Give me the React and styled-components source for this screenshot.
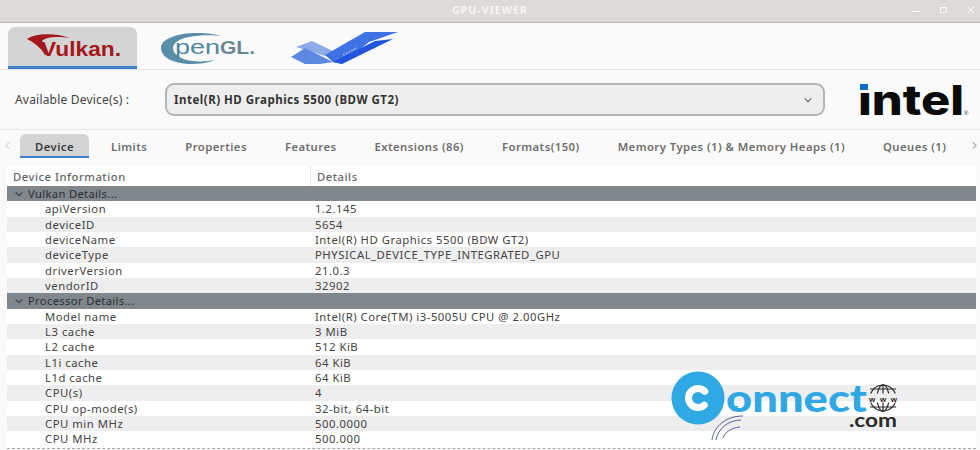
import React from "react";
import styled, { createGlobalStyle } from "styled-components";

const GlobalStyle = createGlobalStyle`
  html, body {
    margin: 0;
    padding: 0;
    width: 980px;
    height: 450px;
    overflow: hidden;
    background: #fafafa;
    font-family: "Noto Sans", "DejaVu Sans", sans-serif;
  }
`;

const Window = styled.div`
  position: relative;
  width: 980px;
  height: 450px;
  overflow: hidden;
  display: flex;
  flex-direction: column;
  background: #fafafa;
`;

const TitleBar = styled.div`
  position: relative;
  height: 22px;
  flex: none;
  display: flex;
  align-items: center;
  justify-content: center;
  background: #dedbd6;
  border-bottom: 1px solid #bdbab5;
`;

const Title = styled.div`
  font-size: 10.5px;
  font-weight: 700;
  letter-spacing: 1.1px;
  color: #f6f5f3;
  margin-top: -2px;
`;

const WindowControls = styled.div`
  position: absolute;
  right: 0;
  top: 4px;
  display: flex;
  align-items: center;
  color: #fbfaf8;
`;

const ControlButton = styled.svg`
  display: block;
  width: 28px;
  height: 12px;
`;

const LogoTabs = styled.div`
  height: 47px;
  flex: none;
  display: flex;
  align-items: flex-end;
  padding-left: 8px;
  box-sizing: border-box;
  border-bottom: 1px solid #e2e2e2;
`;

const LogoTab = styled.div`
  width: ${(p) => p.$width}px;
  height: 42px;
  box-sizing: border-box;
  border-radius: 7px 7px 0 0;
  background: ${(p) => (p.$active ? "#d4d4d4" : "transparent")};
  border-bottom: 3px solid ${(p) => (p.$active ? "#3d7fcb" : "transparent")};
  svg {
    display: block;
  }
`;

const DeviceRow = styled.div`
  height: 60px;
  flex: none;
  display: flex;
  align-items: center;
  box-sizing: border-box;
  padding-left: 15px;
  border-bottom: 1px solid #e9e9e9;
`;

const DeviceLabel = styled.div`
  width: 150px;
  font-size: 12px;
  letter-spacing: 0.2px;
  color: #444;
`;

const DeviceSelect = styled.div`
  width: 660px;
  height: 33px;
  box-sizing: border-box;
  display: flex;
  align-items: center;
  justify-content: space-between;
  padding: 0 10px 0 7px;
  background: #eeeeee;
  border: 2px solid #b4b4b2;
  border-radius: 9px;
  font-size: 11.5px;
  font-weight: 700;
  letter-spacing: 0.5px;
  color: #333;
`;

const IntelLogo = styled.svg`
  display: block;
  margin-left: 33px;
  width: 118px;
  height: 40px;
  overflow: visible;
`;

const TabBar = styled.div`
  height: 32px;
  flex: none;
  display: flex;
  align-items: center;
  position: relative;
  padding-left: 20px;
`;

const TabArrow = styled.div`
  position: absolute;
  top: 11px;
  left: ${(p) => p.$left}px;
  color: #9a9a9a;
  svg {
    display: block;
  }
`;

const Tab = styled.div`
  height: 24px;
  box-sizing: border-box;
  display: flex;
  align-items: center;
  padding: 2px ${(p) => (p.$active ? 15 : 19)}px 0;
  margin-right: ${(p) => (p.$active ? 3 : 0)}px;
  white-space: nowrap;
  font-size: 11.3px;
  font-weight: 600;
  letter-spacing: 0.45px;
  color: ${(p) => (p.$active ? "#3c3c3c" : "#6e6e6e")};
  background: ${(p) => (p.$active ? "#d4d4d4" : "transparent")};
  border-radius: 6px 6px 0 0;
  border-bottom: 2px solid ${(p) => (p.$active ? "#3d7fcb" : "transparent")};
`;

const Table = styled.div`
  margin: 4px 4px 0 7px;
  background: #fff;
  border-bottom: 1px dashed #a8a8a8;
  height: 283px;
  box-sizing: border-box;
  overflow: hidden;
`;

const HeaderRow = styled.div`
  height: 20px;
  display: grid;
  grid-template-columns: 303px 1fr;
  align-items: center;
  font-size: 11.2px;
  font-weight: 500;
  letter-spacing: 0.55px;
  color: #666;
`;

const HeaderCell = styled.div`
  height: 100%;
  display: flex;
  align-items: center;
  box-sizing: border-box;
  padding-left: ${(p) => p.$pad}px;
  border-left: ${(p) => (p.$divider ? "1px solid #e6e6e6" : "none")};
`;

const GroupRow = styled.div`
  height: 15.33px;
  display: flex;
  align-items: center;
  gap: 4px;
  padding-left: 7px;
  background: #80878d;
  font-size: 11.2px;
  letter-spacing: 0.35px;
  color: #2b2f33;
  svg {
    display: block;
  }
`;

const DataRow = styled.div`
  height: 15.33px;
  display: grid;
  grid-template-columns: 308px 1fr;
  align-items: center;
  background: ${(p) => (p.$odd ? "#eeeeee" : "#ffffff")};
  font-size: 11.3px;
  letter-spacing: 0.52px;
  color: #444;
`;

const NameCell = styled.div`
  padding-left: 38px;
`;

const ValueCell = styled.div``;

/* watermark sits on top of the table */
const Watermark = styled.svg`
  position: absolute;
  left: 668px;
  top: 368px;
  width: 240px;
  height: 78px;
`;

const VulkanMark = () => (
  <svg width="129" height="39" viewBox="0 0 129 39">
    <path
      d="M19 12 C26 7 44 5 62 11 C48 9 38 10 34 14 L40 27 L37 28 C33 21 27 16 19 12 Z"
      fill="#a3181c"
    />
    <text
      x="33"
      y="29"
      fontFamily="Liberation Sans"
      fontWeight="700"
      fontSize="19.5"
      textLength="80"
      lengthAdjust="spacingAndGlyphs"
      fill="#a3181c"
    >
      Vulkan.
    </text>
  </svg>
);

const OpenGlMark = () => (
  <svg width="125" height="39" viewBox="0 0 125 39">
    <path
      d="M24 21 C24 12 40 6 60 6 C70 6 78 7 83 9 C74 8 62 8 52 10 C42 12 36 16 36 21 C36 27 44 33 56 34 C64 35 72 34 78 33 C70 36 62 37 55 37 C36 37 24 30 24 21 Z"
      fill="#5b8ea8"
    />
    <text x="38" y="27" fontFamily="Liberation Sans" fontSize="20" textLength="45" lengthAdjust="spacingAndGlyphs" fill="#4f87a3">
      pen
    </text>
    <text x="83" y="27" fontFamily="Liberation Sans" fontWeight="700" fontSize="18" textLength="35" lengthAdjust="spacingAndGlyphs" fill="#6a8794">
      GL.
    </text>
  </svg>
);

const ThirdMark = () => (
  <svg width="125" height="39" viewBox="0 0 125 39">
    <polygon points="17,20 33,14 56,25 46,29" fill="#8fabe9" />
    <polygon points="12,30 26,21 54,35 41,37 26,37" fill="#5d88e2" />
    <polygon points="46,28 86,5 119,5 90,15 63,37 54,35" fill="#3f72e3" />
    <polygon points="54,35 96,14 114,12 63,37" fill="#2255dd" />
    <line x1="64" y1="28" x2="78" y2="21" stroke="#8aa6ea" strokeWidth="2" strokeDasharray="2 1" />
  </svg>
);

const Chevron = ({ dir = "down", size = 9, color = "currentColor" }) => {
  const paths = {
    down: "M1.5 3 L4.5 6 L7.5 3",
    left: "M6 1.5 L3 4.5 L6 7.5",
    right: "M3 1.5 L6 4.5 L3 7.5",
  };
  return (
    <svg width={size} height={size} viewBox="0 0 9 9" fill="none">
      <path d={paths[dir]} stroke={color} strokeWidth="1" />
    </svg>
  );
};

const tabs = [
  "Device",
  "Limits",
  "Properties",
  "Features",
  "Extensions (86)",
  "Formats(150)",
  "Memory Types (1) & Memory Heaps (1)",
  "Queues (1)",
];

const groups = [
  {
    title: "Vulkan Details...",
    rows: [
      ["apiVersion", "1.2.145"],
      ["deviceID", "5654"],
      ["deviceName", "Intel(R) HD Graphics 5500 (BDW GT2)"],
      ["deviceType", "PHYSICAL_DEVICE_TYPE_INTEGRATED_GPU"],
      ["driverVersion", "21.0.3"],
      ["vendorID", "32902"],
    ],
  },
  {
    title: "Processor Details...",
    rows: [
      ["Model name", "Intel(R) Core(TM) i3-5005U CPU @ 2.00GHz"],
      ["L3 cache", "3 MiB"],
      ["L2 cache", "512 KiB"],
      ["L1i cache", "64 KiB"],
      ["L1d cache", "64 KiB"],
      ["CPU(s)", "4"],
      ["CPU op-mode(s)", "32-bit, 64-bit"],
      ["CPU min MHz", "500.0000"],
      ["CPU MHz", "500.000"],
    ],
  },
];

export default function App() {
  return (
    <Window>
      <GlobalStyle />
      <TitleBar>
        <Title>GPU-VIEWER</Title>
        <WindowControls>
          <ControlButton viewBox="0 0 28 12">
            <line x1="16" y1="7.5" x2="24" y2="7.5" stroke="currentColor" />
          </ControlButton>
          <ControlButton viewBox="0 0 28 12">
            <rect x="16.5" y="3.5" width="6" height="5" fill="none" stroke="currentColor" />
          </ControlButton>
          <ControlButton viewBox="0 0 28 12">
            <path d="M16 3 L22 9 M22 3 L16 9" stroke="currentColor" />
          </ControlButton>
        </WindowControls>
      </TitleBar>

      <LogoTabs>
        <LogoTab $active $width={129}>
          <VulkanMark />
        </LogoTab>
        <LogoTab $width={142}>
          <OpenGlMark />
        </LogoTab>
        <LogoTab $width={125}>
          <ThirdMark />
        </LogoTab>
      </LogoTabs>

      <DeviceRow>
        <DeviceLabel>Available Device(s) :</DeviceLabel>
        <DeviceSelect>
          Intel(R) HD Graphics 5500 (BDW GT2)
          <Chevron color="#666" size={10} />
        </DeviceSelect>
        <IntelLogo viewBox="0 0 118 40">
          <text x="0" y="35" fontFamily="Inter" fontWeight="800" fontSize="41" textLength="106" lengthAdjust="spacingAndGlyphs" fill="#0a0a0a">
            intel
          </text>
          <rect x="0" y="0" width="12" height="13" fill="#fafafa" />
          <rect x="2" y="4" width="8" height="6" fill="#0b6fc2" />
          <text x="106" y="35" fontFamily="Liberation Sans" fontSize="6" fill="#333">
            ®
          </text>
        </IntelLogo>
      </DeviceRow>

      <TabBar>
        <TabArrow $left={3}>
          <Chevron dir="left" color="#b5b5b5" />
        </TabArrow>
        {tabs.map((tab, i) => (
          <Tab key={tab} $active={i === 0}>
            {tab}
          </Tab>
        ))}
        <TabArrow $left={970}>
          <Chevron dir="right" color="#777" />
        </TabArrow>
      </TabBar>

      <Table>
        <HeaderRow>
          <HeaderCell $pad={6}>Device Information</HeaderCell>
          <HeaderCell $pad={6} $divider>
            Details
          </HeaderCell>
        </HeaderRow>
        {groups.map((group) => (
          <React.Fragment key={group.title}>
            <GroupRow>
              <Chevron color="#3a3f44" size={10} />
              {group.title}
            </GroupRow>
            {group.rows.map(([name, value], i) => (
              <DataRow key={name} $odd={i % 2 === 1}>
                <NameCell>{name}</NameCell>
                <ValueCell>{value}</ValueCell>
              </DataRow>
            ))}
          </React.Fragment>
        ))}
      </Table>

      <Watermark viewBox="0 0 240 78">
        <defs>
          <clipPath id="globeCaps">
            <rect x="200" y="14" width="30" height="11.5" />
            <rect x="200" y="34.5" width="30" height="12" />
          </clipPath>
        </defs>
        <circle cx="30" cy="30" r="26.5" fill="#2fa8e4" />
        <circle cx="30" cy="30" r="9.5" fill="none" stroke="#fff" strokeWidth="7" strokeLinecap="round" strokeDasharray="44 15.7" strokeDashoffset="-8" />
        <text x="58" y="44" fontFamily="Lato" fontWeight="900" fontSize="37" textLength="141" lengthAdjust="spacingAndGlyphs" fill="#2fa8e4">
          onnect
        </text>
        <polygon points="64,38 71,38 65,44" fill="#2fa8e4" />
        <text x="181" y="59" fontFamily="Lato" fontWeight="700" fontSize="19" textLength="48" lengthAdjust="spacingAndGlyphs" fill="#2b2b2b">
          .com
        </text>
        <g stroke="#2b2b2b" strokeWidth="1.2" fill="none" clipPath="url(#globeCaps)">
          <circle cx="215" cy="30" r="13" />
          <ellipse cx="215" cy="30" rx="6" ry="13" />
          <line x1="202" y1="21" x2="228" y2="21" />
          <line x1="202" y1="39" x2="228" y2="39" />
          <line x1="215" y1="16" x2="215" y2="44" />
        </g>
        <text x="201" y="33.5" fontFamily="Liberation Sans" fontWeight="700" fontSize="8" textLength="28" fill="#2b2b2b">
          www
        </text>
        <g stroke="#5a5f95" strokeWidth="1" fill="none">
          <path d="M44 72 C46 58 58 48 75 48" />
          <path d="M48 72 C50 61 60 52 73 52" />
          <path d="M55 70 C57 64 63 60 72 59" />
        </g>
      </Watermark>
    </Window>
  );
}
